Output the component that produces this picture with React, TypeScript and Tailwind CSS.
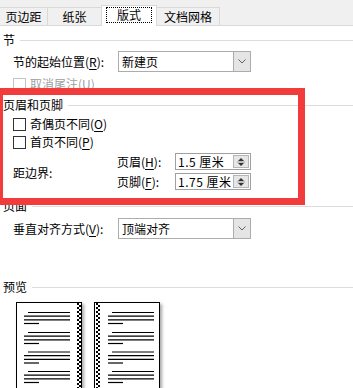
import React from "react";

function SectionHeader({ title, className = "" }: { title: string; className?: string }) {
  return (
    <div className={"flex items-center h-[14px] pl-[3px] " + className}>
      <span>{title}</span>
      <div className="flex-1 h-px bg-[#dcdcdc] ml-[5px]" />
    </div>
  );
}

function Key({ k }: { k: string }) {
  return (
    <>
      (<span className="underline underline-offset-[2px]">{k}</span>)
    </>
  );
}

function Checkbox({ disabled = false }: { disabled?: boolean }) {
  return (
    <div
      className={
        "w-[13px] h-[13px] border bg-white shrink-0 " +
        (disabled ? "border-[#c4c4c4]" : "border-[#333333]")
      }
    />
  );
}

function Dropdown({ value }: { value: string }) {
  return (
    <div className="w-[133px] h-[21px] border border-[#acacac] bg-white flex items-center">
      <span className="flex-1 pl-[3px]">{value}</span>
      <div className="w-[17px] h-full bg-[#e5e5e5] border-l border-[#acacac] flex items-center justify-center">
        <svg width="8" height="5" viewBox="0 0 8 5">
          <path d="M0.5 0.5 L4 4 L7.5 0.5" fill="none" stroke="#606060" strokeWidth="1" />
        </svg>
      </div>
    </div>
  );
}

function Spinner({ value }: { value: string }) {
  return (
    <div className="w-[76px] h-[17px] border border-[#a0a0a0] bg-white flex items-center">
      <span className="flex-1 pl-[2px] tracking-[0.5px]">{value}</span>
      <div className="w-[16px] h-[13px] mr-[1px] bg-[#e6e6e6] border border-[#b5b5b5] flex flex-col items-center justify-center">
        <svg width="8" height="10" viewBox="0 0 8 10">
          <path d="M1 4 L4 1 L7 4 Z" fill="#333" />
          <line x1="0" y1="5" x2="8" y2="5" stroke="#9a9a9a" strokeWidth="1" />
          <path d="M1 6 L4 9 L7 6 Z" fill="#333" />
        </svg>
      </div>
    </div>
  );
}

function PreviewPage({ side }: { side: "left" | "right" }) {
  const x0 = side === "left" ? 7 : 13;
  const x1 = side === "left" ? 53 : 59;
  const stripX = side === "left" ? 60 : 1;
  const groups = [9.5, 29.5, 49, 68.5];
  const squares: React.ReactElement[] = [];
  for (let r = 0; r < 45; r++) {
    for (let c = 0; c < 2; c++) {
      if ((r + c) % 2 === 0)
        squares.push(<rect key={r + "-" + c} x={stripX + c * 2} y={r * 2} width="2" height="2" fill="#000" />);
    }
  }
  return (
    <div className="w-[66px] h-[92px] bg-white border border-black shadow-[2px_2px_3px_rgba(0,0,0,0.35)]">
      <svg width="64" height="90" viewBox="0 0 64 90">
        {squares}
        {groups.map((g) => (
          <g key={g} stroke="#000" strokeWidth="1.2">
            <line x1={x0 + 4} y1={g} x2={x1} y2={g} />
            <line x1={x0} y1={g + 3.6} x2={x1} y2={g + 3.6} />
            <line x1={x0} y1={g + 7.3} x2={x1} y2={g + 7.3} />
            <line x1={x0} y1={g + 11} x2={x0 + 15} y2={g + 11} />
          </g>
        ))}
      </svg>
    </div>
  );
}

export default function App() {
  return (
    <div className="relative w-[353px] h-[388px] overflow-hidden bg-white text-[12px] leading-[14px] text-black font-['Noto_Sans_CJK_SC','Noto_Sans',sans-serif]">
      {/* tabs */}
      <div className="h-[26px] flex items-end bg-[#f0f0f0] border-b border-[#d9d9d9]">
        <div className="w-[48px] h-[18px] border-t border-r border-[#d9d9d9] flex items-center justify-center">
          页边距
        </div>
        <div className="w-[53px] h-[18px] border-t border-[#d9d9d9] flex items-center justify-center">
          纸张
        </div>
        <div className="w-[56px] h-[21px] -mb-px bg-white border-t border-l border-r border-[#d9d9d9] flex items-start justify-center pt-[1px]">
          <div className="w-[46px] h-[16px] border border-dotted border-black flex items-center justify-center">
            版式
          </div>
        </div>
        <div className="w-[63px] h-[18px] border-t border-r border-[#d9d9d9] flex items-center justify-center">
          文档网格
        </div>
      </div>

      <div className="flex flex-col">
        <SectionHeader title="节" className="mt-[7px]" />
        <div className="flex items-center mt-[4px] h-[21px]">
          <span className="w-[118px] pl-[13px]">
            节的起始位置<Key k="R" />:
          </span>
          <Dropdown value="新建页" />
        </div>
        <div className="flex items-center gap-[4px] mt-[5px] h-[14px] pl-[13px] text-[#a0a0a0]">
          <Checkbox disabled />
          <span>
            取消尾注<Key k="U" />
          </span>
        </div>

        <SectionHeader title="页眉和页脚" className="mt-[7px]" />
        <div className="flex items-center gap-[4px] mt-[5px] h-[14px] pl-[13px]">
          <Checkbox />
          <span>
            奇偶页不同<Key k="O" />
          </span>
        </div>
        <div className="flex items-center gap-[4px] mt-[4px] h-[14px] pl-[13px]">
          <Checkbox />
          <span>
            首页不同<Key k="P" />
          </span>
        </div>
        <div className="flex items-center mt-[4px]">
          <span className="w-[117px] pl-[13px] pt-[3px]">距边界:</span>
          <div className="flex flex-col gap-[3px]">
            <div className="flex items-center">
              <span className="w-[58px]">
                页眉<Key k="H" />:
              </span>
              <Spinner value="1.5 厘米" />
            </div>
            <div className="flex items-center">
              <span className="w-[58px]">
                页脚<Key k="F" />:
              </span>
              <Spinner value="1.75 厘米" />
            </div>
          </div>
        </div>

        <SectionHeader title="页面" className="mt-[9px]" />
        <div className="flex items-center mt-[5px] h-[21px]">
          <span className="w-[118px] pl-[13px]">
            垂直对齐方式<Key k="V" />:
          </span>
          <Dropdown value="顶端对齐" />
        </div>

        <SectionHeader title="预览" className="mt-[41px]" />
        <div className="flex gap-[12px] mt-[8px] pl-[16px]">
          <PreviewPage side="left" />
          <PreviewPage side="right" />
        </div>
      </div>

      {/* annotation box */}
      <div className="absolute left-[-4px] top-[88px] w-[309px] h-[117px] border-[7px] border-[#f23b3b]" />
    </div>
  );
}
